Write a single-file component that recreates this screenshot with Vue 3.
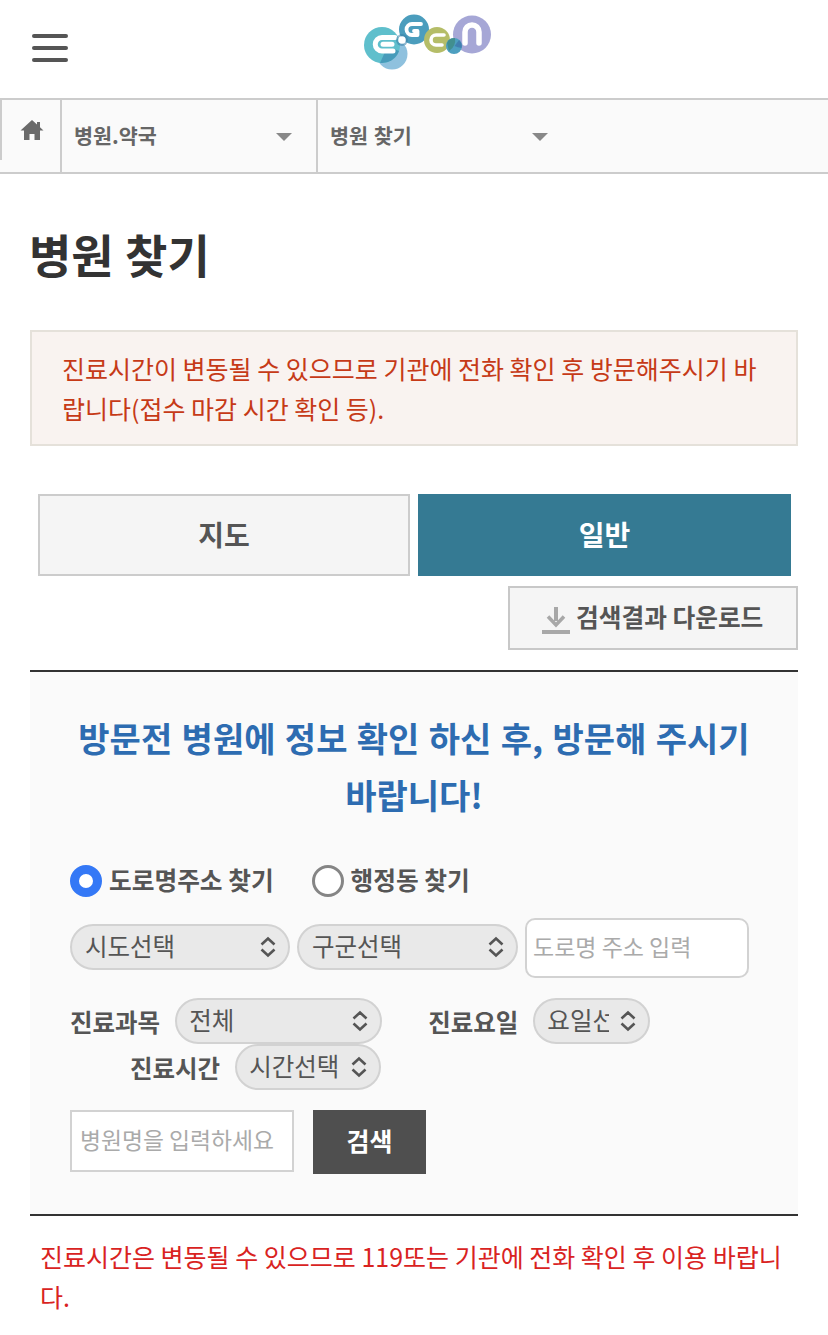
<script setup>
const tabs = [
  { label: '지도', active: false },
  { label: '일반', active: true },
]
</script>

<template>
  <div class="page">
    <header class="top">
      <button class="burger" aria-label="메뉴"><i></i><i></i><i></i></button>
      <svg class="logo" viewBox="0 0 136 64" width="136" height="64">
        <circle cx="32" cy="44" r="15.500" fill="#8fc1de"/>
        <circle cx="22" cy="35" r="18" fill="#5fbfcc"/>
        <path d="M20 52.900a18 18 0 0 0 19-12 15.500 15.500 0 0 0-14 1z" fill="#3f8fb4" opacity=".75"/>
        <circle cx="54" cy="19.500" r="15" fill="#4b9dbd"/>
        <circle cx="77" cy="30" r="13" fill="#b5bd68"/>
        <circle cx="112" cy="24.500" r="19" fill="#a6a7d6"/>
        <circle cx="94" cy="36" r="8" fill="#4d9fc0"/>
        <path d="M87 33a8 8 0 0 1 8-5 13 13 0 0 1-6 13z" fill="#3e8a7f" opacity=".75"/>
        <path d="M99 30a8 8 0 0 1 2.500 8 19 19 0 0 1-7-2z" fill="#3b6fa8" opacity=".65"/>
        <path d="M35 27.500H22a6.500 6.500 0 0 0 0 13.500h11M23 34.200h9" fill="none" stroke="#fff" stroke-width="5" stroke-linecap="round" stroke-linejoin="round"/>
        <circle cx="42" cy="30" r="6" fill="#3b7fa8" opacity=".55"/>
        <circle cx="42" cy="30" r="3.800" fill="#fff"/>
        <path d="M61 14h-9a5.500 5.500 0 0 0 0 11h5.500v-4H54" fill="none" stroke="#fff" stroke-width="3.800" stroke-linecap="round" stroke-linejoin="round"/>
        <path d="M84 25h-8a5 5 0 0 0 0 10h6" fill="none" stroke="#fff" stroke-width="3.600" stroke-linecap="round"/>
        <path d="M105 33V22a7 7 0 0 1 14 0v11" fill="none" stroke="#fff" stroke-width="5.500" stroke-linecap="round"/>
      </svg>
    </header>

    <nav class="crumbs">
      <div class="home">
        <svg viewBox="0 0 24 22" width="24" height="22">
          <path d="M12 1 0.500 11.500H4V21h5.500v-6h5v6H20v-9.500h3.500L20 8.300V3h-3v2.600z" fill="#6a6a6a"/>
        </svg>
      </div>
      <div class="crumb first"><span>병원.약국</span><b class="caret"></b></div>
      <div class="crumb second"><span>병원 찾기</span><b class="caret"></b></div>
    </nav>

    <main class="content">
      <h1>병원 찾기</h1>

      <p class="notice">진료시간이 변동될 수 있으므로 기관에 전화 확인 후 방문해주시기 바랍니다(접수 마감 시간 확인 등).</p>

      <div class="tabs">
        <div v-for="t in tabs" :key="t.label" class="tab" :class="{ active: t.active }">{{ t.label }}</div>
      </div>

      <div class="download-row">
        <button class="download">
          <svg viewBox="0 0 28 28" width="28" height="28">
            <path d="M14 1v14" stroke="#a8a8a8" stroke-width="4" fill="none"/>
            <path d="M6 10.500 14 19l8-8.500" stroke="#a8a8a8" stroke-width="3.500" fill="none"/>
            <rect y="24" width="28" height="4" fill="#a8a8a8"/>
          </svg>
          <span>검색결과 다운로드</span>
        </button>
      </div>

      <section class="panel">
        <h2>방문전 병원에 정보 확인 하신 후, 방문해 주시기 바랍니다!</h2>

        <div class="radios">
          <label class="radio"><i class="dot on"></i>도로명주소 찾기</label>
          <label class="radio"><i class="dot"></i>행정동 찾기</label>
        </div>

        <div class="address">
          <div class="pill w220"><span>시도선택</span><svg class="updown" viewBox="0 0 18 22"><path d="M2.500 8.500 9 2.500l6.500 6M2.500 13.500 9 19.500l6.500-6" fill="none" stroke="#555" stroke-width="2.600"/></svg></div>
          <div class="pill w221"><span>구군선택</span><svg class="updown" viewBox="0 0 18 22"><path d="M2.500 8.500 9 2.500l6.500 6M2.500 13.500 9 19.500l6.500-6" fill="none" stroke="#555" stroke-width="2.600"/></svg></div>
          <div class="field road">도로명 주소 입력</div>
        </div>

        <div class="filters">
          <div class="filter subject">
            <strong>진료과목</strong>
            <div class="pill w207"><span>전체</span><svg class="updown" viewBox="0 0 18 22"><path d="M2.500 8.500 9 2.500l6.500 6M2.500 13.500 9 19.500l6.500-6" fill="none" stroke="#555" stroke-width="2.600"/></svg></div>
          </div>
          <div class="filter day">
            <strong>진료요일</strong>
            <div class="pill w117"><span class="clip">요일선택</span><svg class="updown" viewBox="0 0 18 22"><path d="M2.500 8.500 9 2.500l6.500 6M2.500 13.500 9 19.500l6.500-6" fill="none" stroke="#555" stroke-width="2.600"/></svg></div>
          </div>
          <div class="filter time">
            <strong>진료시간</strong>
            <div class="pill w146"><span>시간선택</span><svg class="updown" viewBox="0 0 18 22"><path d="M2.500 8.500 9 2.500l6.500 6M2.500 13.500 9 19.500l6.500-6" fill="none" stroke="#555" stroke-width="2.600"/></svg></div>
          </div>
        </div>

        <div class="search">
          <div class="field name">병원명을 입력하세요</div>
          <button class="go">검색</button>
        </div>
      </section>

      <p class="warn">진료시간은 변동될 수 있으므로 119또는 기관에 전화 확인 후 이용 바랍니다.</p>
    </main>
  </div>
</template>

<style>
html, body { margin: 0; background: #fff; }
</style>

<style scoped>
.page {
  width: 828px;
  height: 1335px;
  overflow: hidden;
  font-family: "Noto Sans CJK KR", "Noto Sans", sans-serif;
  color: #333;
  background: #fff;
}
.top {
  height: 98px;
  display: flex;
  align-items: flex-start;
  justify-content: center;
  position: relative;
}
.burger {
  position: absolute;
  left: 32px;
  top: 34px;
  width: 36px;
  height: 28px;
  padding: 0;
  border: 0;
  background: none;
  display: flex;
  flex-direction: column;
  justify-content: space-between;
}
.burger i { display: block; height: 4px; border-radius: 2px; background: #555; }
.logo { margin-top: 10px; margin-left: 28px; }
.crumbs {
  height: 72px;
  display: flex;
  background: #fafafa;
  border-top: 2px solid #ccc;
  border-bottom: 2px solid #ccc;
}
.home {
  width: 60px;
  height: 60px;
  flex: none;
  border-left: 2px solid #ccc;
  box-sizing: border-box;
  display: flex;
  justify-content: center;
  padding-top: 19px;
  padding-left: 1px;
}
.crumb {
  display: flex;
  align-items: center;
  box-sizing: border-box;
  border-left: 2px solid #ccc;
  padding-left: 12px;
  font-size: 20.7px;
  font-weight: 700;
  color: #666;
  position: relative;
  word-spacing: 1px;
}
.crumb span { margin-top: -3px; }
.first { width: 256px; }
.second { width: 256px; }
.caret {
  position: absolute;
  right: 24px;
  top: 33px;
  width: 0;
  height: 0;
  border-left: 8px solid transparent;
  border-right: 8px solid transparent;
  border-top: 8px solid #888;
}
.content { padding: 0 30px; }
h1 {
  margin: 46px 0 0 -1px;
  font-size: 46px;
  line-height: 66px;
  font-weight: 700;
  color: #333;
  word-spacing: 1px;
}
.notice {
  margin: 44px 0 0;
  padding: 16px 30px;
  box-sizing: border-box;
  height: 116px;
  background: #f9f3f0;
  border: 2px solid #e5e1da;
  color: #c63a17;
  font-size: 25px;
  line-height: 40px;
  word-break: break-all;
}
.tabs {
  margin: 48px 7px 0 8px;
  display: flex;
  gap: 8px;
}
.tab {
  height: 82px;
  box-sizing: border-box;
  flex: 372px 0 0;
  display: flex;
  align-items: center;
  justify-content: center;
  border: 2px solid #ccc;
  background: #f5f5f5;
  color: #555;
  font-size: 28px;
  font-weight: 700;
  padding-bottom: 2px;
}
.tab.active {
  flex-basis: 373px;
  background: #357a93;
  border-color: #357a93;
  color: #fff;
}
.download-row {
  margin-top: 10px;
  display: flex;
  justify-content: flex-end;
}
.download {
  width: 290px;
  height: 64px;
  box-sizing: border-box;
  padding: 0 0 0 32px;
  border: 2px solid #c8c8c8;
  background: #f5f5f5;
  display: flex;
  align-items: center;
  gap: 6px;
  font-family: inherit;
  font-size: 24.7px;
  font-weight: 700;
  color: #555;
}
.download svg { margin-top: 4px; flex: none; }
.download span { margin-top: -5px; }
.panel {
  margin-top: 20px;
  height: 546px;
  box-sizing: border-box;
  border-top: 2px solid #333;
  border-bottom: 2px solid #333;
  background: #fafafa;
  padding: 37px 40px 0;
}
h2 {
  margin: 0;
  text-align: center;
  font-size: 34px;
  line-height: 57px;
  font-weight: 700;
  color: #2d6cb1;
  word-break: keep-all;
  word-spacing: 1.7px;
}
.radios {
  margin-top: 36px;
  display: flex;
  align-items: center;
  gap: 38px;
}
.radio {
  display: flex;
  align-items: center;
  gap: 7px;
  height: 40px;
  font-size: 24.7px;
  font-weight: 700;
  color: #555;
  line-height: 32px;
}
.dot {
  width: 32px;
  height: 32px;
  flex: none;
  box-sizing: border-box;
  border-radius: 50%;
  border: 3px solid #858585;
  background: #fff;
  margin-top: 3px;
}
.dot.on { border: 9px solid #3478f6; }
.address {
  margin-top: 19px;
  display: flex;
  align-items: flex-start;
  gap: 7px;
}
.address .pill { margin-top: 6px; }
.pill {
  height: 46px;
  box-sizing: border-box;
  border: 2px solid #d2d2d2;
  border-radius: 23px;
  background: #e9e9e9;
  display: flex;
  align-items: center;
  justify-content: space-between;
  padding: 0 11px 0 13px;
  font-size: 24.5px;
  color: #555;
  flex: none;
}
.pill span { margin-top: -4px; white-space: nowrap; }
.pill .clip { width: 62px; overflow: hidden; }
.updown { width: 18px; height: 22px; flex: none; }
.w220 { width: 220px; }
.w221 { width: 221px; }
.w207 { width: 207px; padding-left: 12px; }
.w117 { width: 117px; padding-left: 12px; }
.w146 { width: 146px; padding-left: 12px; }
.field {
  box-sizing: border-box;
  border: 2px solid #d2d2d2;
  background: #fff;
  color: #aaa;
  display: flex;
  align-items: center;
  white-space: nowrap;
}
.road {
  width: 224px;
  height: 60px;
  border-radius: 10px;
  padding: 0 0 4px 6px;
  font-size: 23px;
}
.filters {
  margin-top: 20px;
  display: flex;
  flex-wrap: wrap;
  justify-content: flex-start;
  width: 688px;
}
.filter {
  display: flex;
  align-items: center;
  gap: 15px;
  font-size: 24.5px;
  color: #555;
}
.filter strong { font-weight: 700; margin-top: 1px; }
.subject { margin-right: 46px; }
.time { width: 100%; padding-left: 60px; box-sizing: border-box; }
.search {
  margin-top: 20px;
  display: flex;
  gap: 19px;
}
.name {
  width: 224px;
  height: 62px;
  padding: 0 0 4px 8px;
  font-size: 22.8px;
}
.go {
  width: 113px;
  height: 64px;
  border: 0;
  background: #4f4f4f;
  color: #fff;
  font-family: inherit;
  font-size: 25px;
  font-weight: 700;
  padding: 0 0 4px;
}
.warn {
  margin: 20px 0 0;
  padding-left: 10px;
  color: #d9231f;
  font-size: 25px;
  line-height: 40px;
  word-break: break-all;
}
</style>
